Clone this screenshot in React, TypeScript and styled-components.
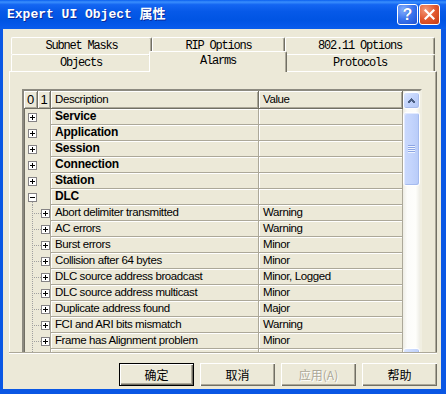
import React from "react";
import styled, { createGlobalStyle } from "styled-components";

const UI = `"Liberation Sans", Arial, sans-serif`;
const MONO = `"Liberation Mono", "Noto Sans CJK SC", monospace`;
const CJK = `"Noto Sans CJK SC", "Liberation Sans", sans-serif`;

const Global = createGlobalStyle`
  html, body { margin: 0; padding: 0; }
  body { width: 446px; height: 394px; overflow: hidden; background: #fff; }
  #root { width: 446px; height: 394px; }
  *, *::before, *::after { box-sizing: border-box; }
`;

const Window = styled.div`
  width: 446px;
  height: 394px;
  display: flex;
  flex-direction: column;
  background: #0A57E4;
`;

const TitleBar = styled.div`
  height: 29px;
  flex: none;
  display: flex;
  align-items: center;
  padding: 0 6px 0 7px;
  background: linear-gradient(
    180deg,
    #0A5FEF 0%,
    #3A8FFD 7%,
    #1466F2 16%,
    #0659E8 40%,
    #0054E3 70%,
    #0558EA 88%,
    #0A5DEB 100%
  );
`;

const Title = styled.div`
  flex: 1;
  font: bold 13px ${MONO};
  color: #fff;
  text-shadow: 1px 1px 0 #0B2A9A;
  white-space: nowrap;
  line-height: 29px;
`;

const CapBtn = styled.div<{ $close?: boolean }>`
  width: 21px;
  height: 21px;
  margin-left: 1px;
  border: 1px solid #fff;
  border-radius: 3px;
  background: ${(p) =>
    p.$close
      ? "radial-gradient(circle at 30% 25%, #F39A7A 0%, #E2582F 50%, #C43C14 100%)"
      : "radial-gradient(circle at 30% 25%, #8AB2FD 0%, #3A74EE 50%, #1D50D0 100%)"};
  display: flex;
  align-items: center;
  justify-content: center;
  color: #fff;
  font: bold 16px ${UI};
  line-height: 1;
  text-shadow: 0 0 1px #1840A8;
`;

const Frame = styled.div`
  flex: 1;
  display: flex;
  padding: 0 5px 5px 3px;
  min-height: 0;
`;

const Client = styled.div`
  flex: 1;
  background: #ECE9D8;
  display: flex;
  flex-direction: column;
  padding: 8px 4px 0 6px;
  min-height: 0;
`;

const TabRow = styled.div<{ $front?: boolean }>`
  display: flex;
  height: 17px;
  margin: 0 2px;
  position: relative;
  z-index: ${(p) => (p.$front ? 2 : 1)};
  align-items: flex-start;
`;

const Tab = styled.div<{ $w: number; $selected?: boolean }>`
  width: ${(p) => p.$w}px;
  flex: none;
  height: ${(p) => (p.$selected ? 21 : 17)}px;
  margin: ${(p) => (p.$selected ? "-3px -2px 0 -2px" : "0")};
  position: relative;
  z-index: ${(p) => (p.$selected ? 3 : 1)};
  background: #ECE9D8;
  border-top: 1px solid #fff;
  border-left: 1px solid #fff;
  border-right: 1px solid #716F64;
  box-shadow: inset -1px 0 0 #ACA899;
  border-radius: 2px 2px 0 0;
  font: 12px ${MONO};
  letter-spacing: -1.2px;
  color: #000;
  display: flex;
  justify-content: center;
  padding-top: ${(p) => (p.$selected ? 2 : 1)}px;
  line-height: 14px;
  white-space: nowrap;
`;

const Panel = styled.div`
  height: 281px;
  flex: none;
  border-top: 1px solid #fff;
  border-left: 1px solid #fff;
  border-right: 1px solid #716F64;
  box-shadow: inset -1px 0 0 #ACA899;
  overflow: hidden;
  padding: 17px 0 0 12px;
  position: relative;
  z-index: 1;
`;

const Separator = styled.div`
  height: 2px;
  flex: none;
  border-top: 1px solid #ACA899;
  border-bottom: 1px solid #fff;
`;

const List = styled.div`
  width: 400px;
  height: 278px;
  flex: none;
  display: flex;
  border-style: solid;
  border-width: 2px;
  border-color: #8C8A80 #F1EFE2 #F1EFE2 #8C8A80;
  box-shadow: inset 1px 1px 0 #716F64;
  background: #ECE9D8;
`;

const Grid = styled.div`
  width: 379px;
  flex: none;
  overflow: hidden;
  display: flex;
  flex-direction: column;
`;

const HeaderRow = styled.div`
  display: grid;
  grid-template-columns: 14px 13px 208px 144px;
  height: 18px;
  flex: none;
`;

const HeadCell = styled.div<{ $center?: boolean }>`
  background: #ECE9D8;
  border-right: 1px solid #716F64;
  border-bottom: 1px solid #716F64;
  box-shadow: inset 1px 1px 0 #fff, inset -1px -1px 0 #ACA899;
  font: ${(p) => (p.$center ? "13px" : "11.5px")} ${UI};
  letter-spacing: ${(p) => (p.$center ? "0" : "-0.4px")};
  color: #000;
  line-height: 17px;
  padding-left: ${(p) => (p.$center ? 0 : 4)}px;
  text-align: ${(p) => (p.$center ? "center" : "left")};
  white-space: nowrap;
  overflow: hidden;
`;

const Row = styled.div`
  display: grid;
  grid-template-columns: 27px 208px 144px;
  height: 16px;
  flex: none;
`;

const TreeCell = styled.div`
  border-right: 1px solid #ACA899;
  display: flex;
`;

const Cell = styled.div<{ $bold?: boolean }>`
  border-right: 1px solid #ACA899;
  border-bottom: 1px solid #ACA899;
  box-shadow: inset 1px 1px 0 #fff;
  font: ${(p) => (p.$bold ? "bold 12px" : "11.5px")} ${UI};
  letter-spacing: ${(p) => (p.$bold ? "-0.2px" : "-0.4px")};
  color: #000;
  line-height: 15px;
  padding-left: 4px;
  white-space: nowrap;
  overflow: hidden;
`;

const VScroll = styled.div`
  width: 17px;
  flex: none;
  display: flex;
  flex-direction: column;
  padding: 1px 0 0;
  background: linear-gradient(90deg, #EEEDE5 0%, #FCFCFA 25%, #FEFEFB 75%, #EEEDE5 100%);
`;

const SBtn = styled.div<{ $bottom?: boolean }>`
  width: 17px;
  height: 17px;
  flex: none;
  margin-top: ${(p) => (p.$bottom ? "auto" : "0")};
  border: 1px solid #fff;
  border-radius: 3px;
  background: linear-gradient(135deg, #DCE6FE 0%, #C3D4FC 45%, #B4C8F6 100%);
  box-shadow: inset -1px -1px 0 #A9BDEC;
  display: flex;
  align-items: center;
  justify-content: center;
`;

const Thumb = styled.div`
  width: 17px;
  height: 74px;
  flex: none;
  margin-top: 3px;
  border: 1px solid #fff;
  border-radius: 3px;
  background: linear-gradient(90deg, #CAD9FD 0%, #C3D4FC 50%, #B8CBF8 100%);
  box-shadow: inset -1px -1px 0 #A5BBEE, inset 1px 1px 0 #E2EAFE;
  display: flex;
  align-items: center;
  justify-content: center;
`;

const ButtonRow = styled.div`
  display: flex;
  justify-content: flex-end;
  gap: 6px;
  margin-top: 9px;
`;

const DlgButton = styled.button<{ $default?: boolean }>`
  width: 75px;
  height: 23px;
  padding: 0;
  margin: 0;
  background: #ECE9D8;
  font: 12px ${CJK};
  color: #000;
  border: ${(p) => (p.$default ? "1px solid #000" : "none")};
  box-shadow: inset 1px 1px 0 #fff, inset -1px -1px 0 #716F64, inset -2px -2px 0 #ACA899;
  display: flex;
  align-items: center;
  justify-content: center;
  &:disabled {
    color: #ACA899;
    text-shadow: 1px 1px 0 #fff;
  }
`;

type Kind = "plus" | "minus" | "child";

const TreeGlyph: React.FC<{ kind: Kind }> = ({ kind }) => {
  const dot = "#A0A0A0";
  const box = (x: number, open: boolean) => (
    <g>
      <rect x={x + 0.5} y={4.5} width={8} height={8} fill="#fff" stroke="#848284" />
      <line x1={x + 2} y1={8.5} x2={x + 7} y2={8.5} stroke="#000" />
      {!open && <line x1={x + 4.5} y1={6} x2={x + 4.5} y2={11} stroke="#000" />}
    </g>
  );
  return (
    <svg width="26" height="16" viewBox="0 0 26 16" shapeRendering="crispEdges">
      {kind === "minus" && (
        <line x1={8.5} y1={13} x2={8.5} y2={16} stroke={dot} strokeDasharray="1 1" />
      )}
      {kind === "child" && (
        <>
          <line x1={8.5} y1={0} x2={8.5} y2={16} stroke={dot} strokeDasharray="1 1" />
          <line x1={10} y1={8.5} x2={17} y2={8.5} stroke={dot} strokeDasharray="1 1" />
        </>
      )}
      {kind === "child" ? box(17, false) : box(4, kind === "minus")}
    </svg>
  );
};

const Arrow: React.FC<{ up?: boolean }> = ({ up }) => (
  <svg width="9" height="6" viewBox="0 0 9 6" shapeRendering="crispEdges">
    <path
      d={up ? "M1 5 L4.5 1.5 L8 5" : "M1 1 L4.5 4.5 L8 1"}
      fill="none"
      stroke="#4D6185"
      strokeWidth="2"
    />
  </svg>
);

const Grip: React.FC = () => (
  <svg width="7" height="8" viewBox="0 0 7 8" shapeRendering="crispEdges">
    {[0, 2, 4, 6].map((y) => (
      <g key={y}>
        <rect x="0" y={y} width="7" height="1" fill="#8CA5E4" />
        <rect x="0" y={y + 1} width="7" height="1" fill="#EEF4FE" />
      </g>
    ))}
  </svg>
);

const groups = ["Service", "Application", "Session", "Connection", "Station"];
const children: [string, string][] = [
  ["Abort delimiter transmitted", "Warning"],
  ["AC errors", "Warning"],
  ["Burst errors", "Minor"],
  ["Collision after 64 bytes", "Minor"],
  ["DLC source address broadcast", "Minor, Logged"],
  ["DLC source address multicast", "Minor"],
  ["Duplicate address found", "Major"],
  ["FCI and ARI bits mismatch", "Warning"],
  ["Frame has Alignment problem", "Minor"],
  ["Frame copied errors", "Minor"],
  ["Frame too long", "Minor"],
];

export default function App() {
  return (
    <>
      <Global />
      <Window>
        <TitleBar>
          <Title>Expert UI Object 属性</Title>
          <CapBtn>?</CapBtn>
          <CapBtn $close>
            <svg width="11" height="11" viewBox="0 0 11 11">
              <path d="M1.5 1.5 L9.5 9.5 M9.5 1.5 L1.5 9.5" stroke="#fff" strokeWidth="2.2" strokeLinecap="square" />
            </svg>
          </CapBtn>
        </TitleBar>
        <Frame>
          <Client>
            <TabRow>
              <Tab $w={141}>Subnet Masks</Tab>
              <Tab $w={133}>RIP Options</Tab>
              <Tab $w={150}>802.11 Options</Tab>
            </TabRow>
            <TabRow $front>
              <Tab $w={140}>Objects</Tab>
              <Tab $w={138} $selected>Alarms</Tab>
              <Tab $w={150}>Protocols</Tab>
            </TabRow>
            <Panel>
              <List>
                <Grid>
                  <HeaderRow>
                    <HeadCell $center>0</HeadCell>
                    <HeadCell $center>1</HeadCell>
                    <HeadCell>Description</HeadCell>
                    <HeadCell>Value</HeadCell>
                  </HeaderRow>
                  {groups.map((g) => (
                    <Row key={g}>
                      <TreeCell>
                        <TreeGlyph kind="plus" />
                      </TreeCell>
                      <Cell $bold>{g}</Cell>
                      <Cell />
                    </Row>
                  ))}
                  <Row>
                    <TreeCell>
                      <TreeGlyph kind="minus" />
                    </TreeCell>
                    <Cell $bold>DLC</Cell>
                    <Cell />
                  </Row>
                  {children.map(([d, v]) => (
                    <Row key={d}>
                      <TreeCell>
                        <TreeGlyph kind="child" />
                      </TreeCell>
                      <Cell>{d}</Cell>
                      <Cell>{v}</Cell>
                    </Row>
                  ))}
                </Grid>
                <VScroll>
                  <SBtn>
                    <Arrow up />
                  </SBtn>
                  <Thumb>
                    <Grip />
                  </Thumb>
                  <SBtn $bottom>
                    <Arrow />
                  </SBtn>
                </VScroll>
              </List>
            </Panel>
            <Separator />
            <ButtonRow>
              <DlgButton $default>确定</DlgButton>
              <DlgButton>取消</DlgButton>
              <DlgButton disabled>应用(A)</DlgButton>
              <DlgButton>帮助</DlgButton>
            </ButtonRow>
          </Client>
        </Frame>
      </Window>
    </>
  );
}
